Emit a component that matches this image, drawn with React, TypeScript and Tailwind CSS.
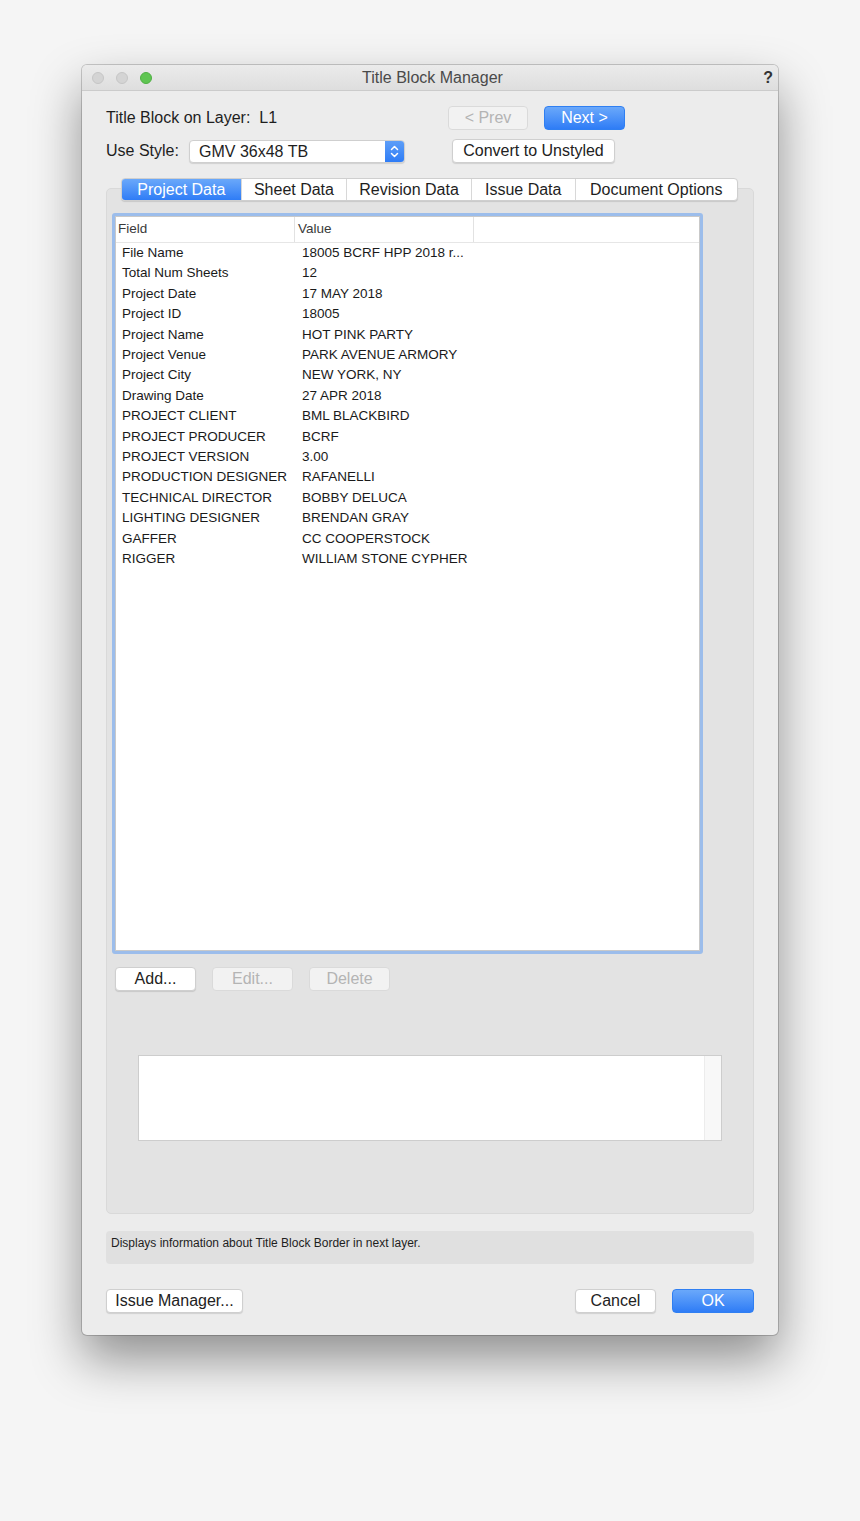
const rows: [string, string][] = [
  ['File Name', '18005 BCRF HPP 2018 r...'],
  ['Total Num Sheets', '12'],
  ['Project Date', '17 MAY 2018'],
  ['Project ID', '18005'],
  ['Project Name', 'HOT PINK PARTY'],
  ['Project Venue', 'PARK AVENUE ARMORY'],
  ['Project City', 'NEW YORK, NY'],
  ['Drawing Date', '27 APR 2018'],
  ['PROJECT CLIENT', 'BML BLACKBIRD'],
  ['PROJECT PRODUCER', 'BCRF'],
  ['PROJECT VERSION', '3.00'],
  ['PRODUCTION DESIGNER', 'RAFANELLI'],
  ['TECHNICAL DIRECTOR', 'BOBBY DELUCA'],
  ['LIGHTING DESIGNER', 'BRENDAN GRAY'],
  ['GAFFER', 'CC COOPERSTOCK'],
  ['RIGGER', 'WILLIAM STONE CYPHER'],
];

const tabs = ['Project Data', 'Sheet Data', 'Revision Data', 'Issue Data', 'Document Options'];
const tabWidths = ['w-[119px]', 'w-[106px]', 'w-[125px]', 'w-[104px]', 'w-[163px]'];

const btn =
  'flex h-[24px] items-center justify-center rounded-[4px] border border-[#cfcfcf] bg-white text-[16px] text-[#222] shadow-[0_1px_1px_rgba(0,0,0,0.12)]';
const btnOff =
  'flex h-[24px] items-center justify-center rounded-[4px] border border-[#dadada] bg-[#f2f2f2] text-[16px] text-[#b4b4b4]';
const btnBlue =
  'flex h-[24px] items-center justify-center rounded-[4px] border border-[#2f7ff2] bg-gradient-to-b from-[#6aa8fa] to-[#2e7cf6] text-[16px] text-white';

export default function App() {
  return (
    <div className="min-h-[1521px] w-full bg-[#f5f5f5] pt-[65px] font-['Liberation_Sans',Arial,sans-serif]">
      <div className="mx-auto w-[696px] overflow-hidden rounded-[5px] bg-[#ececec] shadow-[0_0_0_1px_rgba(0,0,0,0.18),0_24px_50px_rgba(0,0,0,0.42)]">
        {/* Title bar */}
        <div className="flex h-[26px] items-center border-b border-[#cbcbcb] bg-gradient-to-b from-[#ebebeb] to-[#dedede] pl-[10px] pr-[5px]">
          <div className="flex w-[85px] gap-[12px]">
            <span className="h-[12px] w-[12px] rounded-full border border-[#c6c6c6] bg-[#d4d4d4]" />
            <span className="h-[12px] w-[12px] rounded-full border border-[#c6c6c6] bg-[#d4d4d4]" />
            <span className="h-[12px] w-[12px] rounded-full border border-[#4fb043] bg-[#5fc552]" />
          </div>
          <div className="flex-1 text-center text-[16px] text-[#4a4a4a]">Title Block Manager</div>
          <div className="w-[85px] text-right text-[16px] font-bold text-[#333]">?</div>
        </div>

        <div className="px-6 pt-[15px]">
          {/* Row 1 */}
          <div className="flex h-[24px] items-center">
            <div className="w-[342px] text-[16px] text-[#1e1e1e]">Title Block on Layer:&nbsp; L1</div>
            <button className={`${btnOff} w-[80px]`}>&lt; Prev</button>
            <button className={`${btnBlue} ml-[16px] w-[81px]`}>Next &gt;</button>
          </div>

          {/* Row 2 */}
          <div className="mt-[9px] flex h-[24px] items-center">
            <div className="w-[83px] text-[16px] text-[#1e1e1e]">Use Style:</div>
            <div className="flex h-[23px] w-[216px] overflow-hidden rounded-[4px] border border-[#cfcfcf] bg-white shadow-[0_1px_1px_rgba(0,0,0,0.12)]">
              <div className="flex-1 pl-[9px] text-[16px] leading-[21px] text-[#1e1e1e]">GMV 36x48 TB</div>
              <div className="flex w-[19px] items-center justify-center bg-gradient-to-b from-[#5d9ef8] to-[#2e7cf6]">
                <svg width="9" height="15" viewBox="0 0 9 15" fill="none" stroke="white" strokeWidth="1.5" strokeLinecap="round" strokeLinejoin="round">
                  <path d="M1.5 5.5 L4.5 2.5 L7.5 5.5" />
                  <path d="M1.5 9.5 L4.5 12.5 L7.5 9.5" />
                </svg>
              </div>
            </div>
            <button className={`${btn} ml-[47px] w-[163px]`}>Convert to Unstyled</button>
          </div>

          {/* Tab group */}
          <div className="mt-[15px]">
            <div className="relative z-10 ml-[15px] flex h-[23px] w-[617px] overflow-hidden rounded-[4px] border border-[#cfcfcf] bg-white shadow-[0_1px_1px_rgba(0,0,0,0.12)]">
              {tabs.map((t, i) => (
                <div
                  key={t}
                  className={`${tabWidths[i]} flex items-center justify-center text-[16px] ${
                    i === 0
                      ? 'bg-gradient-to-b from-[#6aa8fa] to-[#2e7cf6] text-white'
                      : 'border-l border-[#d8d8d8] text-[#1e1e1e]'
                  }`}
                >
                  {t}
                </div>
              ))}
            </div>

            <div className="-mt-[13px] h-[1026px] rounded-[5px] border border-[#d9d9d9] bg-[#e3e3e3] pt-[24px]">
              {/* Table with focus ring */}
              <div className="ml-[5px] h-[741px] w-[591px] rounded-[3px] border-[3px] border-[#9cbdeb] bg-white">
                <div className="h-full border border-[#c9c9c9]">
                  <div className="flex h-[26px] border-b border-[#e6e6e6] text-[13.5px] text-[#3a3a3a]">
                    <div className="flex w-[179px] items-center border-r border-[#e2e2e2] pl-[2px]">Field</div>
                    <div className="flex w-[179px] items-center border-r border-[#e2e2e2] pl-[3px]">Value</div>
                    <div className="flex-1" />
                  </div>
                  <div>
                    {rows.map(([f, v]) => (
                      <div key={f} className="flex h-[20.4px] items-center text-[13.5px] text-[#1a1a1a]">
                        <div className="w-[186px] pl-[6px]">{f}</div>
                        <div className="flex-1">{v}</div>
                      </div>
                    ))}
                  </div>
                </div>
              </div>

              {/* Add / Edit / Delete */}
              <div className="ml-[8px] mt-[13px] flex gap-[16px]">
                <button className={`${btn} w-[81px]`}>Add...</button>
                <button className={`${btnOff} w-[81px]`}>Edit...</button>
                <button className={`${btnOff} w-[81px]`}>Delete</button>
              </div>

              {/* Text box */}
              <div className="mx-[31px] mt-[64px] flex h-[86px] border border-[#cdcdcd] bg-white">
                <div className="flex-1" />
                <div className="w-[17px] border-l border-[#ececec] bg-[#f8f8f8]" />
              </div>
            </div>
          </div>

          {/* Status */}
          <div className="mt-[17px] h-[33px] rounded-[4px] bg-[#e0e0e0] px-[5px] pt-[3px] text-[12px] text-[#1e1e1e]">
            Displays information about Title Block Border in next layer.
          </div>

          {/* Bottom buttons */}
          <div className="mt-[25px] flex items-center pb-[22px]">
            <button className={`${btn} w-[137px]`}>Issue Manager...</button>
            <div className="flex-1" />
            <button className={`${btn} w-[81px]`}>Cancel</button>
            <button className={`${btnBlue} ml-[16px] w-[82px]`}>OK</button>
          </div>
        </div>
      </div>
    </div>
  );
}
